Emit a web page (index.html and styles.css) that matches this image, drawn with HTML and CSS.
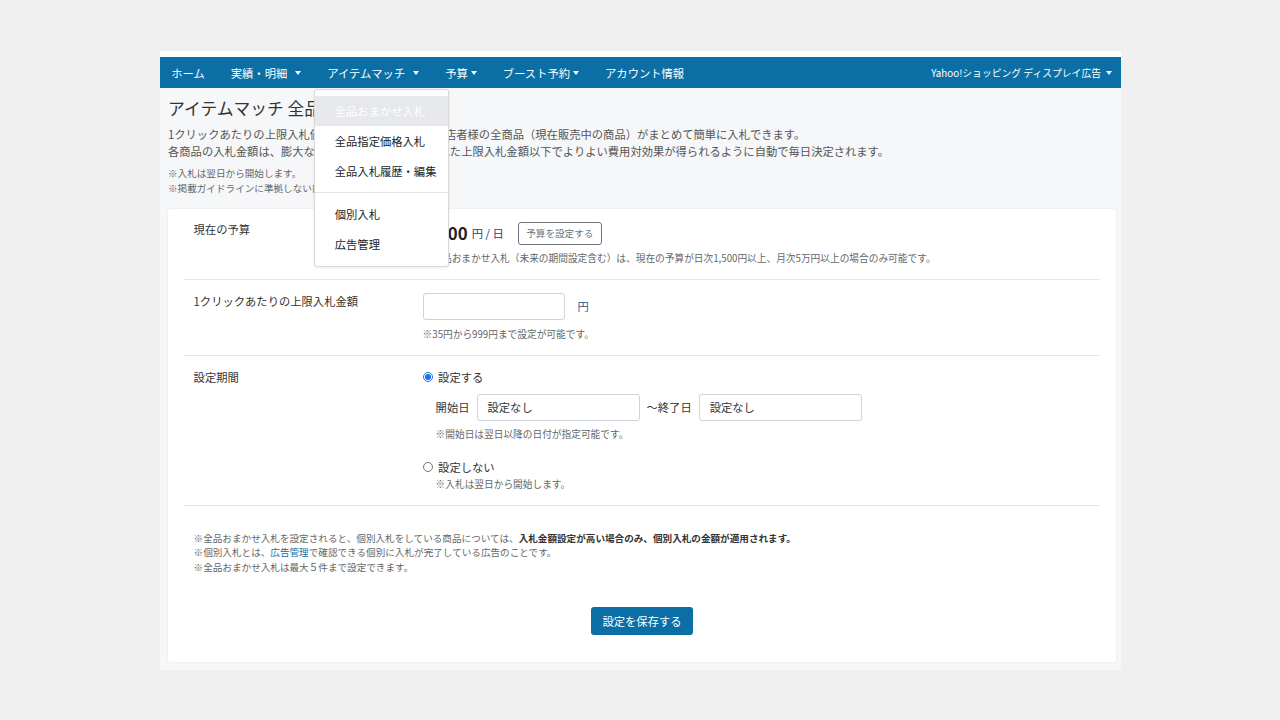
FILE: index.html
```html
<!DOCTYPE html>
<html lang="ja">
<head>
<meta charset="utf-8">
<title>アイテムマッチ 全品おまかせ入札</title>
<link rel="stylesheet" href="styles.css">
</head>
<body>
<div class="frame">
  <nav class="navbar">
    <ul class="nav-left">
      <li><a class="nav-link">ホーム</a></li>
      <li><a class="nav-link">実績・明細<span class="caret wide"></span></a></li>
      <li class="dropdown">
        <a class="nav-link">アイテムマッチ<span class="caret wide"></span></a>
        <div class="dropdown-menu">
          <a class="dropdown-item active">全品おまかせ入札</a>
          <a class="dropdown-item">全品指定価格入札</a>
          <a class="dropdown-item">全品入札履歴・編集</a>
          <div class="dropdown-divider"></div>
          <a class="dropdown-item">個別入札</a>
          <a class="dropdown-item">広告管理</a>
        </div>
      </li>
      <li><a class="nav-link">予算<span class="caret"></span></a></li>
      <li><a class="nav-link">ブースト予約<span class="caret"></span></a></li>
      <li><a class="nav-link">アカウント情報</a></li>
    </ul>
    <div class="nav-right">Yahoo!ショッピング ディスプレイ広告<span class="caret wide"></span></div>
  </nav>

  <main class="content">
    <h1 class="page-title">アイテムマッチ 全品おまかせ入札</h1>
    <p class="lead">1クリックあたりの上限入札価格を設定するだけで、出店者様の全商品（現在販売中の商品）がまとめて簡単に入札できます。<br>各商品の入札金額は、膨大なデータをもとに、設定された上限入札金額以下でよりよい費用対効果が得られるように自動で毎日決定されます。</p>
    <p class="page-notes">※入札は翌日から開始します。<br>※掲載ガイドラインに準拠しない商品は入札対象外となります。</p>

    <section class="card">
      <div class="form-row first">
        <div class="label-col">現在の予算</div>
        <div class="value-col">
          <div class="budget-line">
            <span class="budget-amount">3,000</span>
            <span class="budget-unit">円 / 日</span>
            <button class="btn-outline">予算を設定する</button>
          </div>
          <p class="help">※全品おまかせ入札（未来の期間設定含む）は、現在の予算が日次1,500円以上、月次5万円以上の場合のみ可能です。</p>
        </div>
      </div>

      <div class="form-row bid-row">
        <div class="label-col">1クリックあたりの上限入札金額</div>
        <div class="value-col">
          <div class="bid-line">
            <span class="text-input bid-input"></span>
            <span class="yen">円</span>
          </div>
          <p class="help">※35円から999円まで設定が可能です。</p>
        </div>
      </div>

      <div class="form-row">
        <div class="label-col">設定期間</div>
        <div class="value-col">
          <div class="radio-line"><span class="radio checked"></span>設定する</div>
          <div class="date-block">
            <div class="date-line">
              <span class="date-label">開始日</span>
              <span class="text-input date-input">設定なし</span>
              <span class="date-label tilde">〜終了日</span>
              <span class="text-input date-input">設定なし</span>
            </div>
            <p class="help">※開始日は翌日以降の日付が指定可能です。</p>
          </div>
          <div class="radio-line second"><span class="radio"></span>設定しない</div>
          <p class="help indent">※入札は翌日から開始します。</p>
        </div>
      </div>

      <div class="card-notes">
        <p>※全品おまかせ入札を設定されると、個別入札をしている商品については、<strong>入札金額設定が高い場合のみ、個別入札の金額が適用されます。</strong></p>
        <p>※個別入札とは、<a class="link">広告管理</a>で確認できる個別に入札が完了している広告のことです。</p>
        <p>※全品おまかせ入札は最大５件まで設定できます。</p>
      </div>

      <div class="actions">
        <button class="btn-primary">設定を保存する</button>
      </div>
    </section>
  </main>
</div>
</body>
</html>
```

FILE: styles.css
```css
* {
  box-sizing: border-box;
}

html, body {
  margin: 0;
  padding: 0;
}

body {
  background: #f0f0f0;
  font-family: "Noto Sans CJK JP", "Noto Sans", sans-serif;
  color: #333;
  font-size: 11.3px;
}

.frame {
  width: 961px;
  margin: 51px 0 0 160px;
  background: #f6f7f9;
  border-top: 6px solid #ffffff;
  padding-bottom: 8px;
}

/* Navbar */
.navbar {
  height: 31px;
  background: #0b6fa5;
  display: flex;
  align-items: center;
  justify-content: space-between;
  color: #fff;
}

.nav-left {
  list-style: none;
  margin: 0 0 0 -1.8px;
  padding: 0;
  display: flex;
  align-items: center;
  height: 100%;
}

.nav-left li {
  position: relative;
  height: 100%;
  display: flex;
  align-items: center;
}

.nav-link {
  display: flex;
  align-items: center;
  padding: 0 13px;
  color: #fff;
  font-size: 11.3px;
  line-height: 16px;
  white-space: nowrap;
}

.caret {
  display: inline-block;
  width: 0;
  height: 0;
  margin-left: 3px;
  border-top: 4px solid #fff;
  border-left: 3.5px solid transparent;
  border-right: 3.5px solid transparent;
}

.caret.wide {
  margin-left: 8px;
}

.nav-right {
  display: flex;
  align-items: center;
  padding-right: 9px;
  font-size: 9.8px;
  white-space: nowrap;
}

.nav-right .caret {
  margin-left: 5px;
}

/* Dropdown */
.dropdown-menu {
  position: absolute;
  top: 32px;
  left: 0;
  width: 135px;
  background: #fff;
  border: 1px solid rgba(0, 0, 0, 0.15);
  border-radius: 3px;
  box-shadow: 0 1px 3px rgba(0, 0, 0, 0.08);
  padding: 6px 0 7px;
  z-index: 10;
}

.dropdown-item {
  display: block;
  height: 30px;
  line-height: 30px;
  padding: 0 19.5px;
  color: #212529;
  font-size: 11.3px;
  white-space: nowrap;
}

.dropdown-item.active {
  background: #e6e8eb;
  color: #ffffff;
}

.dropdown-divider {
  height: 0;
  border-top: 1px solid #e3e5e8;
  margin: 6px 0 6px;
}

/* Content */
.content {
  padding: 0 5px 0 8px;
}

.page-title {
  margin: 0;
  padding-top: 9.5px;
  font-size: 16.8px;
  line-height: 20px;
  font-weight: normal;
  color: #333;
}

.lead {
  margin: 8.5px 0 0;
  font-size: 11.3px;
  line-height: 17px;
  color: #555;
}

.page-notes {
  margin: 6px 0 0;
  font-size: 9.6px;
  line-height: 15px;
  color: #666;
}

.card {
  margin-top: 12.5px;
  background: #fff;
  border-radius: 3px;
  box-shadow: 0 0 3px rgba(0, 0, 0, 0.08);
  padding: 0 16px 27px;
}

.form-row {
  display: flex;
  padding: 13px 0 12.5px;
  border-bottom: 1px solid #e4e6e9;
}

.form-row.first {
  padding-top: 12.5px;
}

.form-row.bid-row {
  padding-bottom: 13.5px;
}

.label-col {
  width: 25%;
  flex: none;
  padding: 0 9.6px;
  font-size: 11.3px;
  line-height: 17px;
  color: #333;
}

.value-col {
  flex: 1;
  padding: 0 9.6px;
}

.help {
  margin: 6px 0 0;
  font-size: 9.7px;
  line-height: 15px;
  color: #666;
}

.bid-row .help {
  margin-top: 7px;
}

/* Budget */
.budget-line {
  display: flex;
  align-items: center;
  height: 24px;
}

.budget-amount {
  font-size: 16.8px;
  font-weight: bold;
  color: #222;
  line-height: 20px;
}

.budget-unit {
  margin-left: 4px;
  font-size: 11.3px;
  color: #23426f;
}

.btn-outline {
  margin-left: 14px;
  height: 23px;
  padding: 0 7.5px;
  border: 1px solid #6c757d;
  border-radius: 3px;
  background: #fff;
  color: #6c757d;
  font-family: inherit;
  font-size: 9.6px;
  line-height: 21px;
}

/* Inputs */
.bid-line {
  display: flex;
  align-items: center;
}

.text-input {
  display: inline-flex;
  align-items: center;
  height: 27px;
  border: 1px solid #ced4da;
  border-radius: 3px;
  background: #fff;
  padding: 0 10px;
  font-size: 11.3px;
  color: #333;
}

.bid-input {
  width: 142px;
}

.yen {
  margin-left: 13px;
  color: #2a5a8a;
  font-size: 11.3px;
}

.radio-line {
  display: flex;
  align-items: center;
  height: 16px;
  font-size: 11.3px;
  color: #333;
}

.radio-line.second {
  margin-top: 17px;
}

.radio {
  display: inline-block;
  width: 10.5px;
  height: 10.5px;
  border-radius: 50%;
  border: 1px solid #767676;
  background: #fff;
  margin-right: 5px;
  flex: none;
}

.radio.checked {
  border-color: #1a73e8;
  background: radial-gradient(circle, #1a73e8 0 2.8px, #fff 3.2px);
}

.date-block {
  padding-left: 13px;
  margin-top: 8.5px;
}

.date-line {
  display: flex;
  align-items: center;
}

.date-label {
  font-size: 11.3px;
  color: #333;
  margin-right: 7px;
}

.date-label.tilde {
  margin-left: 7px;
}

.date-input {
  width: 163px;
}

.date-block .help {
  margin-top: 6.5px;
}

.help.indent {
  margin-top: 2px;
  padding-left: 13px;
}

/* Notes */
.card-notes {
  margin-top: 25px;
  padding: 0 9.6px;
}

.card-notes p {
  margin: 0;
  font-size: 9.6px;
  line-height: 14.5px;
  color: #666;
}

.card-notes strong {
  color: #333;
}

.link {
  color: #0b6fa5;
}

.actions {
  margin-top: 32.5px;
  display: flex;
  justify-content: center;
}

.btn-primary {
  height: 28px;
  padding: 0 11px;
  border: none;
  border-radius: 3px;
  background: #0b6fa5;
  color: #fff;
  font-family: inherit;
  font-size: 11.3px;
  line-height: 28px;
}
```
